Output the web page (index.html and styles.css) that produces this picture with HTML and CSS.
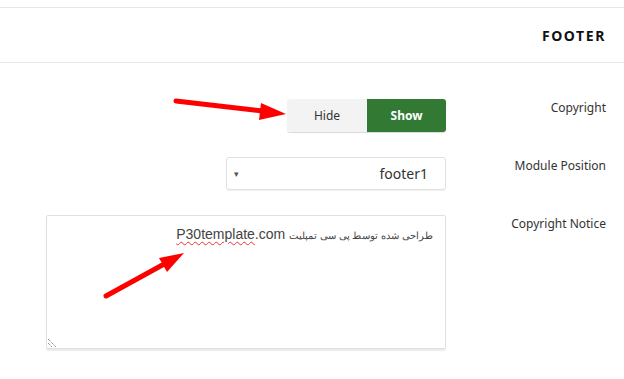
FILE: index.html
```html
<!DOCTYPE html>
<html lang="fa" dir="rtl">
<head>
    <meta charset="UTF-8">
    <meta name="viewport" content="width=device-width, initial-scale=1.0">
    <title>Footer</title>
    <link rel="stylesheet" href="styles.css">
</head>
<body>
    <div class="panel">
        <!-- Cabecera del bloque -->
        <div class="panel-head">
            <h3>FOOTER</h3>
        </div>

        <div class="panel-body">
            <div class="row">
                <label class="row-label">Copyright</label>
                <div class="row-control">
                    <div class="btn-group" dir="ltr">
                        <span class="btn">Hide</span>
                        <span class="btn btn-active">Show</span>
                    </div>
                </div>
            </div>

            <div class="row">
                <label class="row-label">Module Position</label>
                <div class="row-control">
                    <div class="select">
                        <span class="select-value">footer1</span>
                        <span class="select-arrow">&#9662;</span>
                    </div>
                </div>
            </div>

            <div class="row">
                <label class="row-label">Copyright Notice</label>
                <div class="row-control">
                    <div class="textarea">
                        <span class="fa-text">طراحی شده توسط پی سی تمپلیت</span> <span class="typo">P30template</span>.com
                        <svg class="grip" width="9" height="9" viewBox="0 0 9 9">
                            <line x1="0" y1="1" x2="8" y2="9" stroke="#666" stroke-width="1" stroke-dasharray="1 1"/>
                            <line x1="0" y1="5" x2="4" y2="9" stroke="#666" stroke-width="1" stroke-dasharray="1 1"/>
                        </svg>
                    </div>
                </div>
            </div>
        </div>
    </div>

    <!-- Flechas de anotación -->
    <svg class="arrows" width="624" height="379" viewBox="0 0 624 379">
        <line x1="176" y1="101" x2="263" y2="111" stroke="#f00" stroke-width="5" stroke-linecap="round"/>
        <polygon points="286,114 261,103 259,120" fill="#f00"/>
        <line x1="106" y1="296" x2="166" y2="263" stroke="#f00" stroke-width="5" stroke-linecap="round"/>
        <polygon points="184,253 167,272 159,258" fill="#f00"/>
    </svg>
</body>
</html>
```
FILE: styles.css
```css
* {
    box-sizing: border-box;
}
body {
    margin: 0;
    font-family: "Noto Sans", Tahoma, sans-serif;
    font-size: 12px;
    color: #333;
    background-color: white;
    position: relative;
    height: 379px;
    overflow: hidden;
}
.panel {
    padding-top: 7px;
}
.panel-head {
    height: 56px;
    border-top: 1px solid #e6e6e6;
    border-bottom: 1px solid #e6e6e6;
    display: flex;
    align-items: center;
    padding-right: 18px;
}
.panel-head h3 {
    margin: 0;
    font-size: 14px;
    font-weight: bold;
    letter-spacing: 1.6px;
    color: #111;
}
.panel-body {
    padding-top: 36px;
    padding-right: 18px;
    display: flex;
    flex-direction: column;
    gap: 25px;
}
.row {
    display: flex;
    gap: 20px;
}
.row-label {
    width: 140px;
    line-height: 17px;
    text-align: right;
    color: #333;
}
.row-control {
    display: flex;
}
.btn-group {
    display: flex;
    border-radius: 3px;
    overflow: hidden;
    box-shadow: 0 1px 1px rgba(0,0,0,0.15);
}
.btn {
    width: 80px;
    height: 33px;
    line-height: 33px;
    text-align: center;
    background-color: #f3f3f3;
    color: #333;
}
.btn-active {
    width: 79px;
    background-color: #327a34;
    color: white;
    font-weight: bold;
}
.select {
    width: 220px;
    height: 33px;
    border: 1px solid #e0e0e0;
    border-radius: 3px;
    box-shadow: 0 1px 1px rgba(0,0,0,0.06);
    display: flex;
    align-items: center;
    justify-content: space-between;
    padding: 0 17px 0 7px;
}
.select-value {
    font-size: 14px;
    color: #333;
}
.select-arrow {
    font-size: 9px;
    color: #555;
}
.textarea {
    position: relative;
    width: 400px;
    height: 134px;
    border: 1px solid #e0e0e0;
    border-radius: 2px;
    box-shadow: 0 2px 1px rgba(0,0,0,0.08);
    padding: 9px 12px 0 0;
    font-family: "Liberation Sans", Arial, sans-serif;
    font-size: 14px;
    line-height: 18px;
    color: #444;
    text-align: right;
}
.fa-text {
    font-size: 10px;
}
.typo {
    text-decoration: underline wavy #e33;
    text-decoration-thickness: 1px;
    text-underline-offset: 2px;
}
.grip {
    position: absolute;
    left: 1px;
    bottom: 1px;
}
.arrows {
    position: absolute;
    top: 0;
    left: 0;
    pointer-events: none;
}
```
